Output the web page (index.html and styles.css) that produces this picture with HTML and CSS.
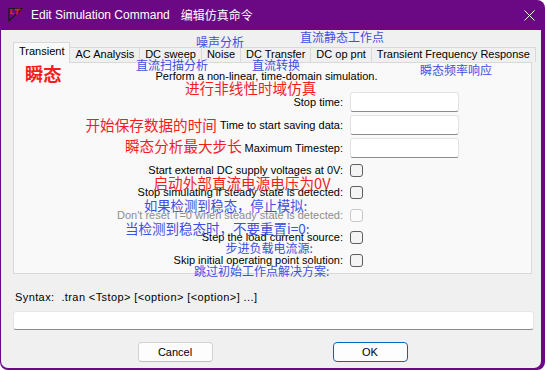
FILE: index.html
```html
<!DOCTYPE html>
<html>
<head lang="zh-cn">
    <meta charset="UTF-8">
    <title>Edit Simulation Command</title>
    <link rel="stylesheet" href="styles.css">
</head>
<body>
    <div class="window">
        <div class="titlebar">
            <svg class="app-icon" width="15" height="15" viewBox="0 0 15 15">
                <path d="M1 1.5 H14 L1 14 Z" fill="none" stroke="#1a1a1a" stroke-width="1.2"/>
                <path d="M3.5 2 L2.8 6.5 L6 6.5 M7 2.5 H12.5 M10 2.5 L8.8 7.5" fill="none" stroke="#e3201b" stroke-width="1.6"/>
            </svg>
            <span class="title">Edit Simulation Command</span>
            <span class="title-cn">编辑仿真命令</span>
            <svg class="close" width="11" height="11" viewBox="0 0 11 11">
                <path d="M0.5 0.5 L10.5 10.5 M10.5 0.5 L0.5 10.5" stroke="#fff" stroke-width="1"/>
            </svg>
        </div>
        <div class="client">
            <ul class="tabs">
                <li class="tab active">Transient</li>
                <li class="tab">AC Analysis</li>
                <li class="tab">DC sweep</li>
                <li class="tab">Noise</li>
                <li class="tab">DC Transfer</li>
                <li class="tab">DC op pnt</li>
                <li class="tab">Transient Frequency Response</li>
            </ul>
            <div class="panel">
                <p class="desc">Perform a non-linear, time-domain simulation.</p>
                <div class="row field-row">
                    <label>Stop time:</label><span class="field"></span>
                </div>
                <div class="row field-row">
                    <label>Time to start saving data:</label><span class="field"></span>
                </div>
                <div class="row field-row">
                    <label>Maximum Timestep:</label><span class="field"></span>
                </div>
                <div class="row check-row first">
                    <label>Start external DC supply voltages at 0V:</label><span class="check"></span>
                </div>
                <div class="row check-row">
                    <label>Stop simulating if steady state is detected:</label><span class="check"></span>
                </div>
                <div class="row check-row disabled">
                    <label>Don't reset T=0 when steady state is detected:</label><span class="check"></span>
                </div>
                <div class="row check-row">
                    <label>Step the load current source:</label><span class="check"></span>
                </div>
                <div class="row check-row">
                    <label>Skip initial operating point solution:</label><span class="check"></span>
                </div>
            </div>
            <div class="syntax">Syntax:  .tran &lt;Tstop&gt; [&lt;option&gt; [&lt;option&gt;] ...]</div>
            <div class="cmd"></div>
            <div class="buttons">
                <button class="btn">Cancel</button>
                <button class="btn ok">OK</button>
            </div>
        </div>

        <!-- 标注 -->
        <span class="note red big n-transient">瞬态</span>
        <span class="note blue n-noise">噪声分析</span>
        <span class="note blue n-oppnt">直流静态工作点</span>
        <span class="note blue n-sweep">直流扫描分析</span>
        <span class="note blue n-transfer">直流转换</span>
        <span class="note blue n-tfr">瞬态频率响应</span>
        <span class="note red n-desc">进行非线性时域仿真</span>
        <span class="note red n-save">开始保存数据的时间</span>
        <span class="note red n-step">瞬态分析最大步长</span>
        <span class="note red n-ext">启动外部直流电源电压为0V</span>
        <span class="note blue mid n-steady">如果检测到稳态，停止模拟:</span>
        <span class="note blue mid2 n-reset">当检测到稳态时，不要重置i=0:</span>
        <span class="note blue n-load">步进负载电流源:</span>
        <span class="note blue n-skip">跳过初始工作点解决方案:</span>
    </div>
</body>
</html>
```

FILE: styles.css
```css
body,p,ul { margin: 0; padding: 0;}
body { font-family: "Liberation Sans", "Noto Sans CJK SC", sans-serif; font-size: 11px; background: #fff;}
li { list-style: none;}

.window {
    position: relative;
    width: 545px;
    height: 370px;
    display: flex;
    flex-direction: column;
    background: #6b0883;
    border-radius: 0 8px 8px 8px;
    overflow: hidden;
}
.titlebar {
    height: 30px;
    display: flex;
    align-items: center;
    padding: 0 10px 0 8px;
    color: #fff;
    font-size: 12px;
    line-height: 14px;
}
.app-icon { margin-top: -2px;}
.title { margin-left: 8px;}
.title-cn { margin-left: 11px; font-family: "Noto Sans CJK SC", sans-serif; font-size: 12px;}
.close { margin-left: auto;}

.client {
    flex: 1;
    margin: 0 4px 2px 1px;
    padding: 12px 9px 0 12px;
    background: #f0f0f0;
    border-radius: 0 0 7px 7px;
    color: #000;
}

/* tabs */
.tabs {
    display: flex;
    align-items: flex-end;
    height: 20px;
}
.tab {
    box-sizing: border-box;
    height: 15px;
    padding: 0 5px;
    line-height: 13px;
    border: 1px solid #d9d9d9;
    border-bottom: none;
    margin-left: -1px;
    white-space: nowrap;
}
.tab:first-child { margin-left: 0;}
.tab.active {
    position: relative;
    z-index: 1;
    height: 21px;
    padding-top: 2px;
    margin-bottom: -1px;
    background: #f9f9f9;
}
.panel {
    box-sizing: border-box;
    height: 212px;
    padding-top: 7px;
    border: 1px solid #d9d9d9;
    background: #f9f9f9;
}
.desc {
    line-height: 13px;
    text-align: center;
    padding-right: 12px;
    margin-bottom: 9px;
}
.row {
    display: grid;
    grid-template-columns: 1fr 109px;
    column-gap: 7px;
    align-items: center;
    padding-right: 72px;
    line-height: 13px;
}
.row label { text-align: right; white-space: nowrap;}
.field-row { height: 20px; margin-bottom: 3px;}
.check-row { height: 22.5px;}
.check-row.first { margin-top: -2px;}
.field {
    box-sizing: border-box;
    height: 20px;
    background: #fff;
    border: 1px solid #e3e3e3;
    border-bottom-color: #8c8c8c;
    border-radius: 3px;
}
.check {
    box-sizing: border-box;
    width: 13px;
    height: 13px;
    border: 1px solid #5e5e5e;
    border-radius: 3px;
    background: #f4f4f4;
}
.disabled label { color: #8d8d8d;}
.disabled .check { border-color: #c9c9c9; background: #fbfbfb;}

/* bottom */
.syntax {
    margin-top: 17px;
    padding-left: 2px;
    line-height: 13px;
    letter-spacing: 0.4px;
    white-space: pre;
}
.cmd {
    box-sizing: border-box;
    height: 19px;
    margin: 7px -2px 0 0;
    background: #fff;
    border: 1px solid #e6e6e6;
    border-bottom-color: #8c8c8c;
    border-radius: 3px;
}
.buttons {
    display: flex;
    justify-content: center;
    gap: 120px;
    margin-top: 12px;
}
.btn {
    box-sizing: border-box;
    width: 75px;
    height: 20px;
    padding: 0;
    font: 11px "Liberation Sans", sans-serif;
    color: #000;
    background: #fdfdfd;
    border: 1px solid #d3d3d3;
    border-bottom-color: #bdbdbd;
    border-radius: 4px;
}
.btn.ok { border-color: #0067c0;}

/* 标注 */
.note {
    position: absolute;
    line-height: 1;
    white-space: nowrap;
    font-family: "Noto Sans CJK SC", sans-serif;
}
.red { color: #f41c1c; font-size: 14.6px;}
.red.big { font-size: 18.3px; font-weight: bold;}
.blue { color: #3f4fe0; font-size: 12px;}
.blue.mid { font-size: 13.3px;}
.blue.mid2 { font-size: 13.5px;}

.n-transient { left: 25px; top: 64px;}
.n-noise { left: 196px; top: 35.5px;}
.n-oppnt { left: 300px; top: 31px;}
.n-sweep { left: 136px; top: 58.5px;}
.n-transfer { left: 252px; top: 58.8px;}
.n-tfr { left: 420px; top: 63.8px;}
.n-desc { left: 185px; top: 81.2px;}
.n-save { left: 85.5px; top: 117.5px;}
.n-step { left: 125px; top: 138.5px;}
.n-ext { left: 153.5px; top: 175.5px;}
.n-steady { left: 144px; top: 199.4px;}
.n-reset { left: 125px; top: 222px;}
.n-load { left: 225.4px; top: 242px;}
.n-skip { left: 194px; top: 264.8px;}
```
